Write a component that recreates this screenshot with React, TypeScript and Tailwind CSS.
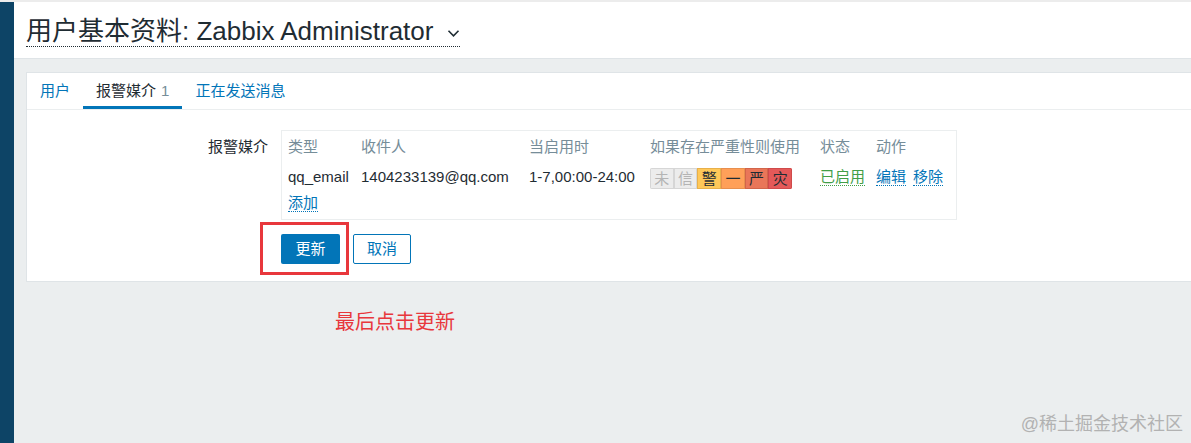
import React from 'react';

const FONT = '"Liberation Sans", Arial, "Noto Sans CJK SC", sans-serif';

const severities = [
  { label: '未', cls: 'bg-[#ececec] border-[#d6d6d6] text-[#b4b4b4]' },
  { label: '信', cls: 'bg-[#ececec] border-[#d6d6d6] text-[#b4b4b4]' },
  { label: '警', cls: 'bg-[#ffc859] border-[#e8b04a] text-[#1f2c33]' },
  { label: '一', cls: 'bg-[#ffa059] border-[#e88f4e] text-[#1f2c33]' },
  { label: '严', cls: 'bg-[#e97659] border-[#d2654a] text-[#1f2c33]' },
  { label: '灾', cls: 'bg-[#e45959] border-[#cf4a4a] text-[#1f2c33]' },
];

const DottedLink = ({ children, color = 'blue' }: { children: React.ReactNode; color?: 'blue' | 'green' }) => (
  <span
    className={
      color === 'green'
        ? 'text-[#429e47] border-b border-dotted border-[#429e47] leading-[17px]'
        : 'text-[#0275b8] border-b border-dotted border-[#0275b8] leading-[17px]'
    }
  >
    {children}
  </span>
);

export default function App() {
  return (
    <div
      className="relative flex h-[443px] w-[1191px] overflow-hidden bg-[#ebeeef] border-t-2 border-[#ececec] text-[15px] text-[#1f2c33]"
      style={{ fontFamily: FONT }}
    >
      <aside className="w-[14px] shrink-0 bg-[#0d4466]" />

      <main className="flex flex-1 flex-col">
        <header className="flex h-[57px] items-center border-b border-[#dfe4e7] bg-white pl-[12px]">
          <h1 className="flex items-center border-b border-dotted border-[#1f2c33] pt-[3px] text-[26px] leading-[30px]">
            <span>用户基本资料: Zabbix Administrator</span>
            <svg className="ml-[14px] mt-[4px]" width="13" height="9" viewBox="0 0 13 9" fill="none">
              <path d="M1.5 1.8 L6.5 6.8 L11.5 1.8" stroke="#1f2c33" strokeWidth="1.6" />
            </svg>
          </h1>
        </header>

        <section className="ml-[12px] mt-[13px] h-[210px] border-y border-l border-[#dfe4e7] bg-white">
          <nav className="flex h-[37px] border-b border-[#ebeeef] pl-0">
            <a className="flex items-center px-[13px] text-[#0275b8]">用户</a>
            <a className="flex items-center border-b-[3px] border-[#0275b8] px-[13px] pt-[3px]">
              报警媒介 <span className="ml-[5px] text-[#768d99]">1</span>
            </a>
            <a className="flex items-center px-[13px] text-[#0275b8]">正在发送消息</a>
          </nav>

          <div className="flex pt-[20px]">
            <div className="w-[241px] pt-[6px] text-right leading-[22px]">报警媒介</div>
            <div className="ml-[13px]">
              <div className="w-[676px] border border-[#ebeeef] px-[6px] pb-[4px] pt-[5px]">
                <div className="grid grid-cols-[73px_168px_121px_170px_56px_1fr] items-center">
                  <div className="h-[28px] leading-[22px] text-[#768d99]">类型</div>
                  <div className="h-[28px] leading-[22px] text-[#768d99]">收件人</div>
                  <div className="h-[28px] leading-[22px] text-[#768d99]">当启用时</div>
                  <div className="h-[28px] leading-[22px] text-[#768d99]">如果存在严重性则使用</div>
                  <div className="h-[28px] leading-[22px] text-[#768d99]">状态</div>
                  <div className="h-[28px] leading-[22px] text-[#768d99]">动作</div>

                  <div className="h-[29px] pt-[2px] leading-[22px]">qq_email</div>
                  <div className="h-[29px] pt-[2px] leading-[22px]">1404233139@qq.com</div>
                  <div className="h-[29px] pt-[2px] leading-[22px]">1-7,00:00-24:00</div>
                  <div className="flex h-[29px] items-center">
                    <div className="flex overflow-hidden rounded-[2px]">
                      {severities.map(s => (
                        <span
                          key={s.label}
                          className={`flex h-[21px] w-[23.7px] items-center justify-center border text-[15px] leading-none ${s.cls}`}
                        >
                          {s.label}
                        </span>
                      ))}
                    </div>
                  </div>
                  <div className="h-[29px] pt-[2px] leading-[22px]">
                    <DottedLink color="green">已启用</DottedLink>
                  </div>
                  <div className="h-[29px] pt-[2px] leading-[22px]">
                    <DottedLink>编辑</DottedLink>
                    <span className="inline-block w-[7px]" />
                    <DottedLink>移除</DottedLink>
                  </div>
                </div>
                <div className="h-[22px] leading-[20px]">
                  <DottedLink>添加</DottedLink>
                </div>
              </div>

              <div className="mt-[14px] flex gap-[13px]">
                <button className="h-[30px] w-[59px] rounded-[2px] bg-[#0275b8] text-white">更新</button>
                <button className="h-[30px] w-[58px] rounded-[2px] border border-[#0275b8] bg-white text-[#0275b8]">
                  取消
                </button>
              </div>
            </div>
          </div>
        </section>

        <p className="ml-[321px] mt-[28px] text-[20px] leading-[24px] text-[#e8373c]">最后点击更新</p>
      </main>

      {/* screenshot annotation box */}
      <div className="pointer-events-none absolute left-[260px] top-[220px] h-[53px] w-[89px] border-[3px] border-[#e8373c]" />

      <div className="absolute bottom-[5px] right-[8px] text-[18px] text-[#b2b2b2]">@稀土掘金技术社区</div>
    </div>
  );
}
